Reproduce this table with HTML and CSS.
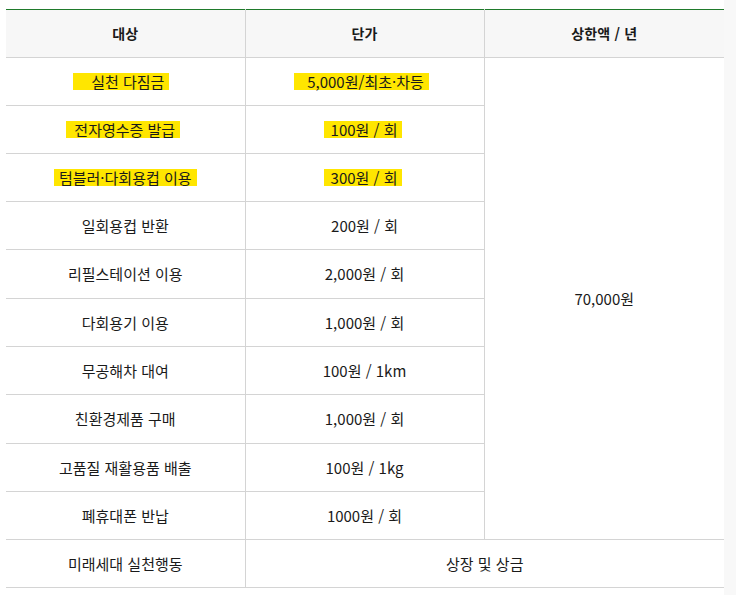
FILE: index.html
```html
<!DOCTYPE html>
<html lang="ko">
<head>
<meta charset="utf-8">
<link rel="stylesheet" href="styles.css">
</head>
<body>
<div class="page">
  <main class="main">
    <table class="tbl">
      <colgroup><col class="c1"><col class="c2"><col class="c3"></colgroup>
      <thead>
        <tr><th>대상</th><th>단가</th><th>상한액 / 년</th></tr>
      </thead>
      <tbody>
        <tr><td><span class="hl p18 shift8">실천 다짐금</span></td><td><span class="hl p13 shift6">5,000원/최초·차등</span></td><td rowspan="10" class="cap">70,000원</td></tr>
        <tr><td><span class="hl p8 shift4">전자영수증 발급</span></td><td><span class="hl p7 shift3">100원 / 회</span></td></tr>
        <tr><td><span class="hl p5">텀블러·다회용컵 이용</span></td><td><span class="hl p7 shift3">300원 / 회</span></td></tr>
        <tr><td>일회용컵 반환</td><td>200원 / 회</td></tr>
        <tr class="tall"><td>리필스테이션 이용</td><td>2,000원 / 회</td></tr>
        <tr><td>다회용기 이용</td><td>1,000원 / 회</td></tr>
        <tr><td>무공해차 대여</td><td>100원 / 1km</td></tr>
        <tr class="tall"><td>친환경제품 구매</td><td>1,000원 / 회</td></tr>
        <tr><td>고품질 재활용품 배출</td><td>100원 / 1kg</td></tr>
        <tr><td>폐휴대폰 반납</td><td>1000원 / 회</td></tr>
        <tr><td>미래세대 실천행동</td><td colspan="2">상장 및 상금</td></tr>
      </tbody>
    </table>
  </main>
  <div class="rail"></div>
</div>
</body>
</html>
```

FILE: styles.css
```css
* { box-sizing: border-box; }
html, body { margin: 0; padding: 0; background: #fff; }
body {
  font-family: "Noto Sans CJK KR", "Noto Sans", sans-serif;
  color: #1a1a1a;
}
.page {
  display: flex;
  min-height: 595px;
}
.main {
  flex: 1;
  padding: 9px 0 0 6px;
}
.rail {
  width: 12px;
  background: #f8f8f8;
}
.tbl {
  width: 718px;
  border-collapse: collapse;
  table-layout: fixed;
  border-top: 1px solid #1f7a2b;
}
.c1 { width: 239px; }
.c2 { width: 239px; }
.c3 { width: 240px; }
.tbl th, .tbl td {
  height: 48px;
  padding: 0 0 1px;
  text-align: center;
  vertical-align: middle;
  font-size: 15px;
  border-bottom: 1px solid #d4d4d4;
  border-left: 1px solid #d4d4d4;
}
.tbl tr.tall td { height: 49px; }
.tbl th:first-child, .tbl td:first-child { border-left: none; }
.tbl td.cap { border-left: 1px solid #d4d4d4; }
.tbl th {
  background: #f7f7f7;
  font-weight: 700;
  font-size: 14px;
  letter-spacing: 0.2px;
  height: 48px;
}
.hl {
  display: inline-block;
  background: #ffe600;
  line-height: 17px;
  height: 17px;
  padding-right: 5px;
}
.p18 { padding-left: 18px; }
.p13 { padding-left: 13px; }
.p8 { padding-left: 8px; }
.p7 { padding-left: 7px; }
.p5 { padding-left: 5px; }
.shift8 { margin-right: 8px; }
.shift6 { margin-right: 6px; }
.shift4 { margin-right: 4px; }
.shift3 { margin-right: 3px; }
```
